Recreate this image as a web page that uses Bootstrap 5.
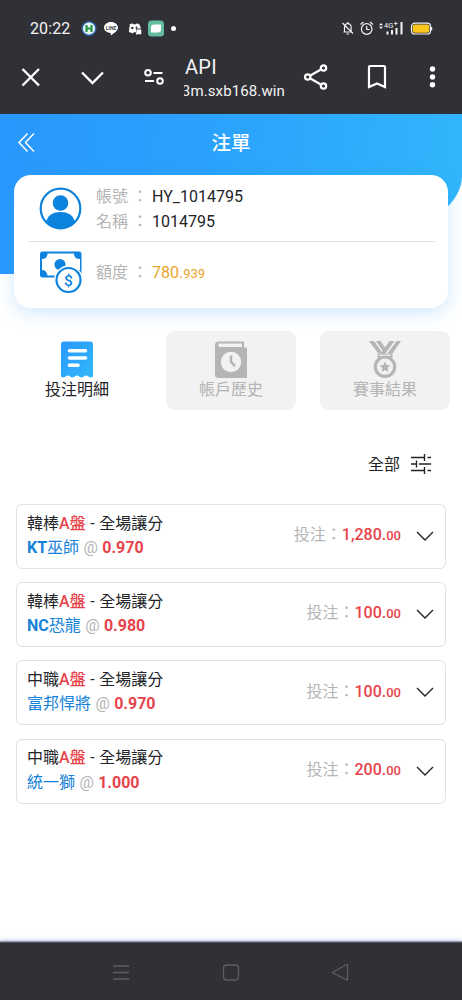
<!DOCTYPE html>
<html lang="zh-Hant">
<head>
<meta charset="utf-8">
<meta name="viewport" content="width=device-width, initial-scale=1">
<title>注單</title>
<link rel="stylesheet" href="https://cdn.jsdelivr.net/npm/bootstrap@5.3.0/dist/css/bootstrap.min.css">
<style>
  body { font: 16px/24.4px Roboto, "Noto Sans CJK TC", sans-serif; color: #222428; background: #fff; height: 1000px; }
  svg { display: block; flex: none; }
  .chrome-top { height: 114px; background: #303136; color: #f3f3f4; }
  .status-row { height: 57px; padding: 0 29px 0 30px; }
  .clock { font-size: 16px; letter-spacing: .1px; padding-top: 1px; }
  .tool-row { height: 57px; padding-bottom: 18px; }
  .page-id { width: 103px; margin-left: 20px; line-height: 23px; padding-top: 5px; }
  .page-name { font-size: 20px; padding-left: 1px; letter-spacing: .3px; }
  .page-host { font-size: 15px; direction: rtl; width: 101px; letter-spacing: .12px; line-height: 24px; }
  .hero { height: 160px; background: linear-gradient(100deg, #2997fd 0%, #2ba2fc 45%, #31b7fb 100%); border-bottom-right-radius: 280px 98px; }
  .hero-title { height: 61px; color: #fff; font-size: 19.5px; padding-bottom: 3px; }
  .account { margin: -99px 14px 0; height: 133px; border-radius: 17px; background: #fff; box-shadow: 0 5px 18px rgba(45, 155, 250, .22); padding: 0 13px 0 14px; }
  .account-row { padding-left: 11px; gap: 14px; }
  .account-row + .account-row { height: 66px; border-top: 1px solid #e2e2e2; padding-bottom: 5px; }
  .account-text { padding-top: 3px; }
  .muted-text { color: #b4b4b4; }
  .gold { color: #eba52d; }
  .cents { font-size: 13px; }
  .tabs-row { margin: 23px 12px 0; gap: 24px; }
  .tab-tile { height: 79px; border-radius: 9px; padding-top: 10px; color: #b4b4b4; background: #f2f2f2; }
  .tab-tile.current { background: #fff; color: #222428; }
  .filter { margin: 42px 30px 0; gap: 10px; height: 24px; }
  .bets { margin: 28px 16px 0; gap: 13.2px; }
  .bet { height: 65px; border: 1.5px solid #e2e2e2; border-radius: 6px; padding: 0 11px 1px 10px; }
  .bet-red { color: #e8434a; }
  .bet-blue { color: #1482d8; }
  .thick { font-weight: 700; }
  .mid { font-weight: 500; }
  .bet-name { word-spacing: .6px; }
  .bet-odds { word-spacing: .4px; }
  .chevron { margin-left: 15px; }
  .nav-keys { height: 58px; background: #303136; color: #5c5d62; border-top: 1px solid #4c4e59; box-shadow: 0 -1px 1px rgba(120, 130, 165, .7), 0 -1px 5px rgba(110, 130, 180, .5); }
</style>
</head>
<body class="d-flex flex-column overflow-hidden">
<div class="chrome-top">
  <div class="status-row d-flex align-items-center">
    <span class="clock">20:22</span>
    <svg width="96" height="18" viewBox="0 0 96 18" style="margin-left:11px">
      <circle cx="8" cy="8.500" r="6.800" fill="#e9f6f3" stroke="#2e67ad" stroke-width="1.400"/>
      <path d="M5.500 5v7M10.500 5v7M5.500 8.500h5" stroke="#279447" stroke-width="2.200" fill="none"/>
      <path d="M30 2c4 0 7 2.500 7 5.600 0 3-3 5-6.500 7.400-.7.400-1 .200-.8-.500V13C26 12.800 23 10.500 23 7.600 23 4.500 26 2 30 2Z" fill="#fff"/>
      <text x="30" y="9.500" font-size="5" font-weight="700" text-anchor="middle" fill="#46474b">LINE</text>
      <path d="M48 4.700l3-1.500 1 1h3l1-1 2.500 1.300 1.500 4h-5v4l-2-.5-1 1.500-4-1.500q0-4 1-7.300Z" fill="#fff"/>
      <circle cx="51.300" cy="8" r="1.200" fill="#303136"/><circle cx="55.500" cy="7.500" r="1" fill="#303136"/>
      <path d="M55.500 9.500h4.800v4.800h-4.300l-1 1Z" fill="#fff"/>
      <rect x="67" y="0.500" width="16" height="16" rx="3.500" fill="#65bd9f"/>
      <path d="M70 7.500q0-3 3-3h7v5q0 3-3 3h-7Z" fill="#fff"/>
      <circle cx="92.500" cy="8.500" r="2.500" fill="#fff"/>
    </svg>
    <svg class="ms-auto" width="92" height="18" viewBox="0 0 92 18" fill="none" stroke="#f3f3f4" stroke-width="1.200">
      <path d="M2.500 12h8.500M3.500 11.500V7.500a3.300 3.300 0 0 1 6.600-1v5M6.800 3v-1M5.500 14h2.500M1.500 3l10.500 10.500"/>
      <circle cx="25.700" cy="9" r="5.300"/><path d="M25.700 6v3.500h3M19.500 4.500l3-2.500M29 2l3 2.500"/>
      <path d="M38 5.200l2-2.200 2 2.200ZM38 6.800l2 2.200 2-2.200Z" fill="#f3f3f4" stroke="none"/>
      <text x="43" y="7.800" font-size="7.500" fill="#f3f3f4" stroke="none">4G</text>
      <path d="M53 3.500h3.500M54.700 1.700v3.600" stroke-width=".9"/>
      <path d="M46.500 11.500v3M51 10v4.500M55.500 8v6.500M60.500 2v12.500" stroke-width="2"/>
      <rect x="70.500" y="3.200" width="19" height="10.800" rx="3.300"/>
      <rect x="71.700" y="4.400" width="16.600" height="8.400" rx="2.200" fill="#fbc51c" stroke="none"/><path d="M90.600 7v3.500"/>
    </svg>
  </div>
  <div class="tool-row d-flex align-items-center">
    <svg width="164" height="28" viewBox="0 0 164 28" fill="none" stroke="#fff" stroke-width="2.400">
      <path d="M22.500 6l16.500 16.500M39 6L22.500 22.500M82 9.500L92.500 20 103 9.500"/>
      <g stroke-width="2"><circle cx="148" cy="9.800" r="2.800"/><circle cx="160" cy="18" r="2.800"/><path d="M153.500 10h9M145 18h9"/></g>
    </svg>
    <div class="page-id">
      <div class="page-name">API</div>
      <div class="page-host overflow-hidden text-nowrap"><bdi>3m.sxb168.win</bdi></div>
    </div>
    <svg width="175" height="30" viewBox="0 0 175 30" fill="none" stroke="#fff" stroke-width="2.200">
      <path d="M36.500 6L20.700 15l15.800 9"/><g fill="#303136"><circle cx="36.500" cy="6" r="2.700"/><circle cx="20.700" cy="15" r="2.700"/><circle cx="36.500" cy="24" r="2.700"/></g>
      <path d="M82 5q0-1 1-1h14q1 0 1 1v20l-8-3.500-8 3.500Z"/>
      <g fill="#fff" stroke="none"><circle cx="145.500" cy="7" r="2.700"/><circle cx="145.500" cy="15" r="2.700"/><circle cx="145.500" cy="22.700" r="2.700"/></g>
    </svg>
  </div>
</div>

<header class="hero flex-shrink-0">
  <div class="hero-title d-flex align-items-center">
    <svg width="40" height="22" viewBox="0 0 40 22" fill="none" stroke="#fff" stroke-width="1.500"><path d="M27.500 1.500L19 10.500l8.500 9M34 1.500l-8.500 9 8.500 9"/></svg>
    <span class="flex-grow-1 text-center mid" style="padding-top:2px">注單</span>
    <span style="width:40px"></span>
  </div>
</header>

<section class="account position-relative flex-shrink-0">
  <div class="account-row d-flex align-items-center" style="height:66px">
    <svg width="43" height="43" viewBox="0 0 43 43"><circle cx="21.500" cy="21.500" r="19.800" fill="#fff" stroke="#0c83dd" stroke-width="2.200"/><circle cx="21.500" cy="16" r="7.800" fill="#0c83dd"/><path d="M7 34.500q2.500-9.500 14.500-9.500T36 34.500q-6 6.700-14.500 6.700T7 34.500Z" fill="#0c83dd"/></svg>
    <div class="account-text">
      <div><span class="muted-text">帳號 ： </span>HY_1014795</div>
      <div><span class="muted-text">名稱 ： </span>1014795</div>
    </div>
  </div>
  <div class="account-row d-flex align-items-center">
    <svg width="43" height="43" viewBox="0 0 43 43" fill="#0c83dd">
      <rect x="1" y="0.500" width="41.500" height="26" rx="2.500"/>
      <path d="M8.500 2.500h26.500q0 5.500 6 5.500v11q-5 0-6 5.500H8.500q-1-5.500-5.500-5.500v-11q5.500 0 5.500-5.500Z" fill="#fff"/>
      <circle cx="21" cy="13.500" r="5.500"/><circle cx="29.500" cy="29" r="14.500" fill="#fff"/>
      <circle cx="29.500" cy="29" r="12" fill="#fff" stroke="#0c83dd" stroke-width="2.200"/>
      <text x="29.500" y="34.500" font-size="15.500" font-weight="500" text-anchor="middle">$</text>
    </svg>
    <div class="account-text"><span class="muted-text">額度 ： </span><span class="gold">780.<span class="cents">939</span></span></div>
  </div>
</section>

<nav class="tabs-row d-flex text-center">
  <div class="tab-tile current" style="flex:1">
    <svg class="mx-auto" width="34" height="37" viewBox="0 0 34 37"><defs><linearGradient id="receipt" x2="1" y2="1"><stop stop-color="#2997fd"/><stop offset="1" stop-color="#31b9fb"/></linearGradient></defs><path d="M4 .5h26q3 0 3 3V35.500q-2.500 2-4.700 0-2.300-2-4.600 0-2.300 2-4.500 0-2.200-2-4.500 0-2.300 2-4.500 0-2.300-2-4.600 0Q3 37.500 1 35.500V3.500q0-3 3-3Z" fill="url(#receipt)"/><path d="M9.500 9.700h16M9.500 17h16M9.500 24.300h8.500" stroke="#fff" stroke-width="3.600" stroke-linecap="round"/></svg>
    <div>投注明細</div>
  </div>
  <div class="tab-tile" style="flex:1">
    <svg class="mx-auto" width="34" height="37" viewBox="0 0 34 37"><path d="M1 4q0-3.500 3.500-3.500H30v6h3v30.500H4.500Q1 37 1 33.500Z" fill="#b5b5b5"/><path d="M5 2.500h23v3.500H5q-1.500-1.700 0-3.500Z" fill="#f2f2f2"/><circle cx="17" cy="21" r="10.200" fill="#f2f2f2"/><path d="M17 14.500V21l4 4" fill="none" stroke="#b5b5b5" stroke-width="2.500"/></svg>
    <div>帳戶歷史</div>
  </div>
  <div class="tab-tile" style="flex:1">
    <svg class="mx-auto" width="34" height="37" viewBox="0 0 34 37"><path d="M1 0h5l8.500 12H9.800ZM8 0h4.500l5 7-2.500 3.500ZM21.500 0h5L16.500 13.500H12ZM28.500 0H33l-8.500 12.500h-5Z" fill="#b5b5b5"/><path d="M9.500 12.500h15v4h-15z" fill="#b5b5b5"/><path d="M11.500 14.300h11" stroke="#f2f2f2" stroke-width="1.500"/><circle cx="17" cy="25.700" r="9.700" fill="#f2f2f2" stroke="#b5b5b5" stroke-width="3.200"/><path d="M17 20.500l1.600 3.500 3.900.4-2.900 2.600.8 3.900-3.400-2-3.400 2 .8-3.900-2.900-2.600 3.900-.4Z" fill="#b5b5b5"/></svg>
    <div>賽事結果</div>
  </div>
</nav>

<div class="filter d-flex align-items-center justify-content-end">
  <span style="padding-top:2px">全部</span>
  <svg width="22" height="22" viewBox="0 0 22 22" fill="none" stroke="#222428" stroke-width="1.400"><path d="M1 4.500h13.500M17.500 4.500H21M14.500 1v7M1 11h5M9 11h12M6.500 7.500v7M1 17.500h13.500M17.500 17.500H21M14.500 14v7"/></svg>
</div>

<main class="bets d-flex flex-column">
  <article class="bet d-flex align-items-center">
    <div><div class="bet-name">韓棒<span class="bet-red mid">A盤</span> - 全場讓分</div><div class="bet-odds"><span class="bet-blue"><span class="thick">KT</span>巫師</span> <span class="muted-text">@</span> <span class="bet-red thick">0.970</span></div></div>
    <div class="ms-auto"><span class="muted-text">投注：</span><span class="bet-red mid">1,280.<span class="cents">00</span></span></div>
    <svg class="chevron" width="18" height="12" viewBox="0 0 18 12" fill="none" stroke="#222428" stroke-width="1.400"><path d="M1 2l8 8 8-8"/></svg>
  </article>
  <article class="bet d-flex align-items-center">
    <div><div class="bet-name">韓棒<span class="bet-red mid">A盤</span> - 全場讓分</div><div class="bet-odds"><span class="bet-blue"><span class="thick">NC</span>恐龍</span> <span class="muted-text">@</span> <span class="bet-red thick">0.980</span></div></div>
    <div class="ms-auto"><span class="muted-text">投注：</span><span class="bet-red mid">100.<span class="cents">00</span></span></div>
    <svg class="chevron" width="18" height="12" viewBox="0 0 18 12" fill="none" stroke="#222428" stroke-width="1.400"><path d="M1 2l8 8 8-8"/></svg>
  </article>
  <article class="bet d-flex align-items-center">
    <div><div class="bet-name">中職<span class="bet-red mid">A盤</span> - 全場讓分</div><div class="bet-odds"><span class="bet-blue">富邦悍將</span> <span class="muted-text">@</span> <span class="bet-red thick">0.970</span></div></div>
    <div class="ms-auto"><span class="muted-text">投注：</span><span class="bet-red mid">100.<span class="cents">00</span></span></div>
    <svg class="chevron" width="18" height="12" viewBox="0 0 18 12" fill="none" stroke="#222428" stroke-width="1.400"><path d="M1 2l8 8 8-8"/></svg>
  </article>
  <article class="bet d-flex align-items-center">
    <div><div class="bet-name">中職<span class="bet-red mid">A盤</span> - 全場讓分</div><div class="bet-odds"><span class="bet-blue">統一獅</span> <span class="muted-text">@</span> <span class="bet-red thick">1.000</span></div></div>
    <div class="ms-auto"><span class="muted-text">投注：</span><span class="bet-red mid">200.<span class="cents">00</span></span></div>
    <svg class="chevron" width="18" height="12" viewBox="0 0 18 12" fill="none" stroke="#222428" stroke-width="1.400"><path d="M1 2l8 8 8-8"/></svg>
  </article>
</main>

<footer class="nav-keys mt-auto d-flex justify-content-center align-items-center flex-shrink-0">
  <svg width="240" height="20" viewBox="0 0 240 20" fill="none" stroke="currentColor" stroke-width="1.300"><path d="M2 4h16M2 10.500h16M2 17h16"/><rect x="112.500" y="3" width="15" height="15" rx="3"/><path d="M236.500 3.500v14q0 .8-.8.400L222.200 11q-.7-.5 0-1L235.700 2.500q.8-.4.8.5Z"/></svg>
</footer>
<script src="https://cdn.jsdelivr.net/npm/bootstrap@5.3.0/dist/js/bootstrap.bundle.min.js"></script>
</body>
</html>
